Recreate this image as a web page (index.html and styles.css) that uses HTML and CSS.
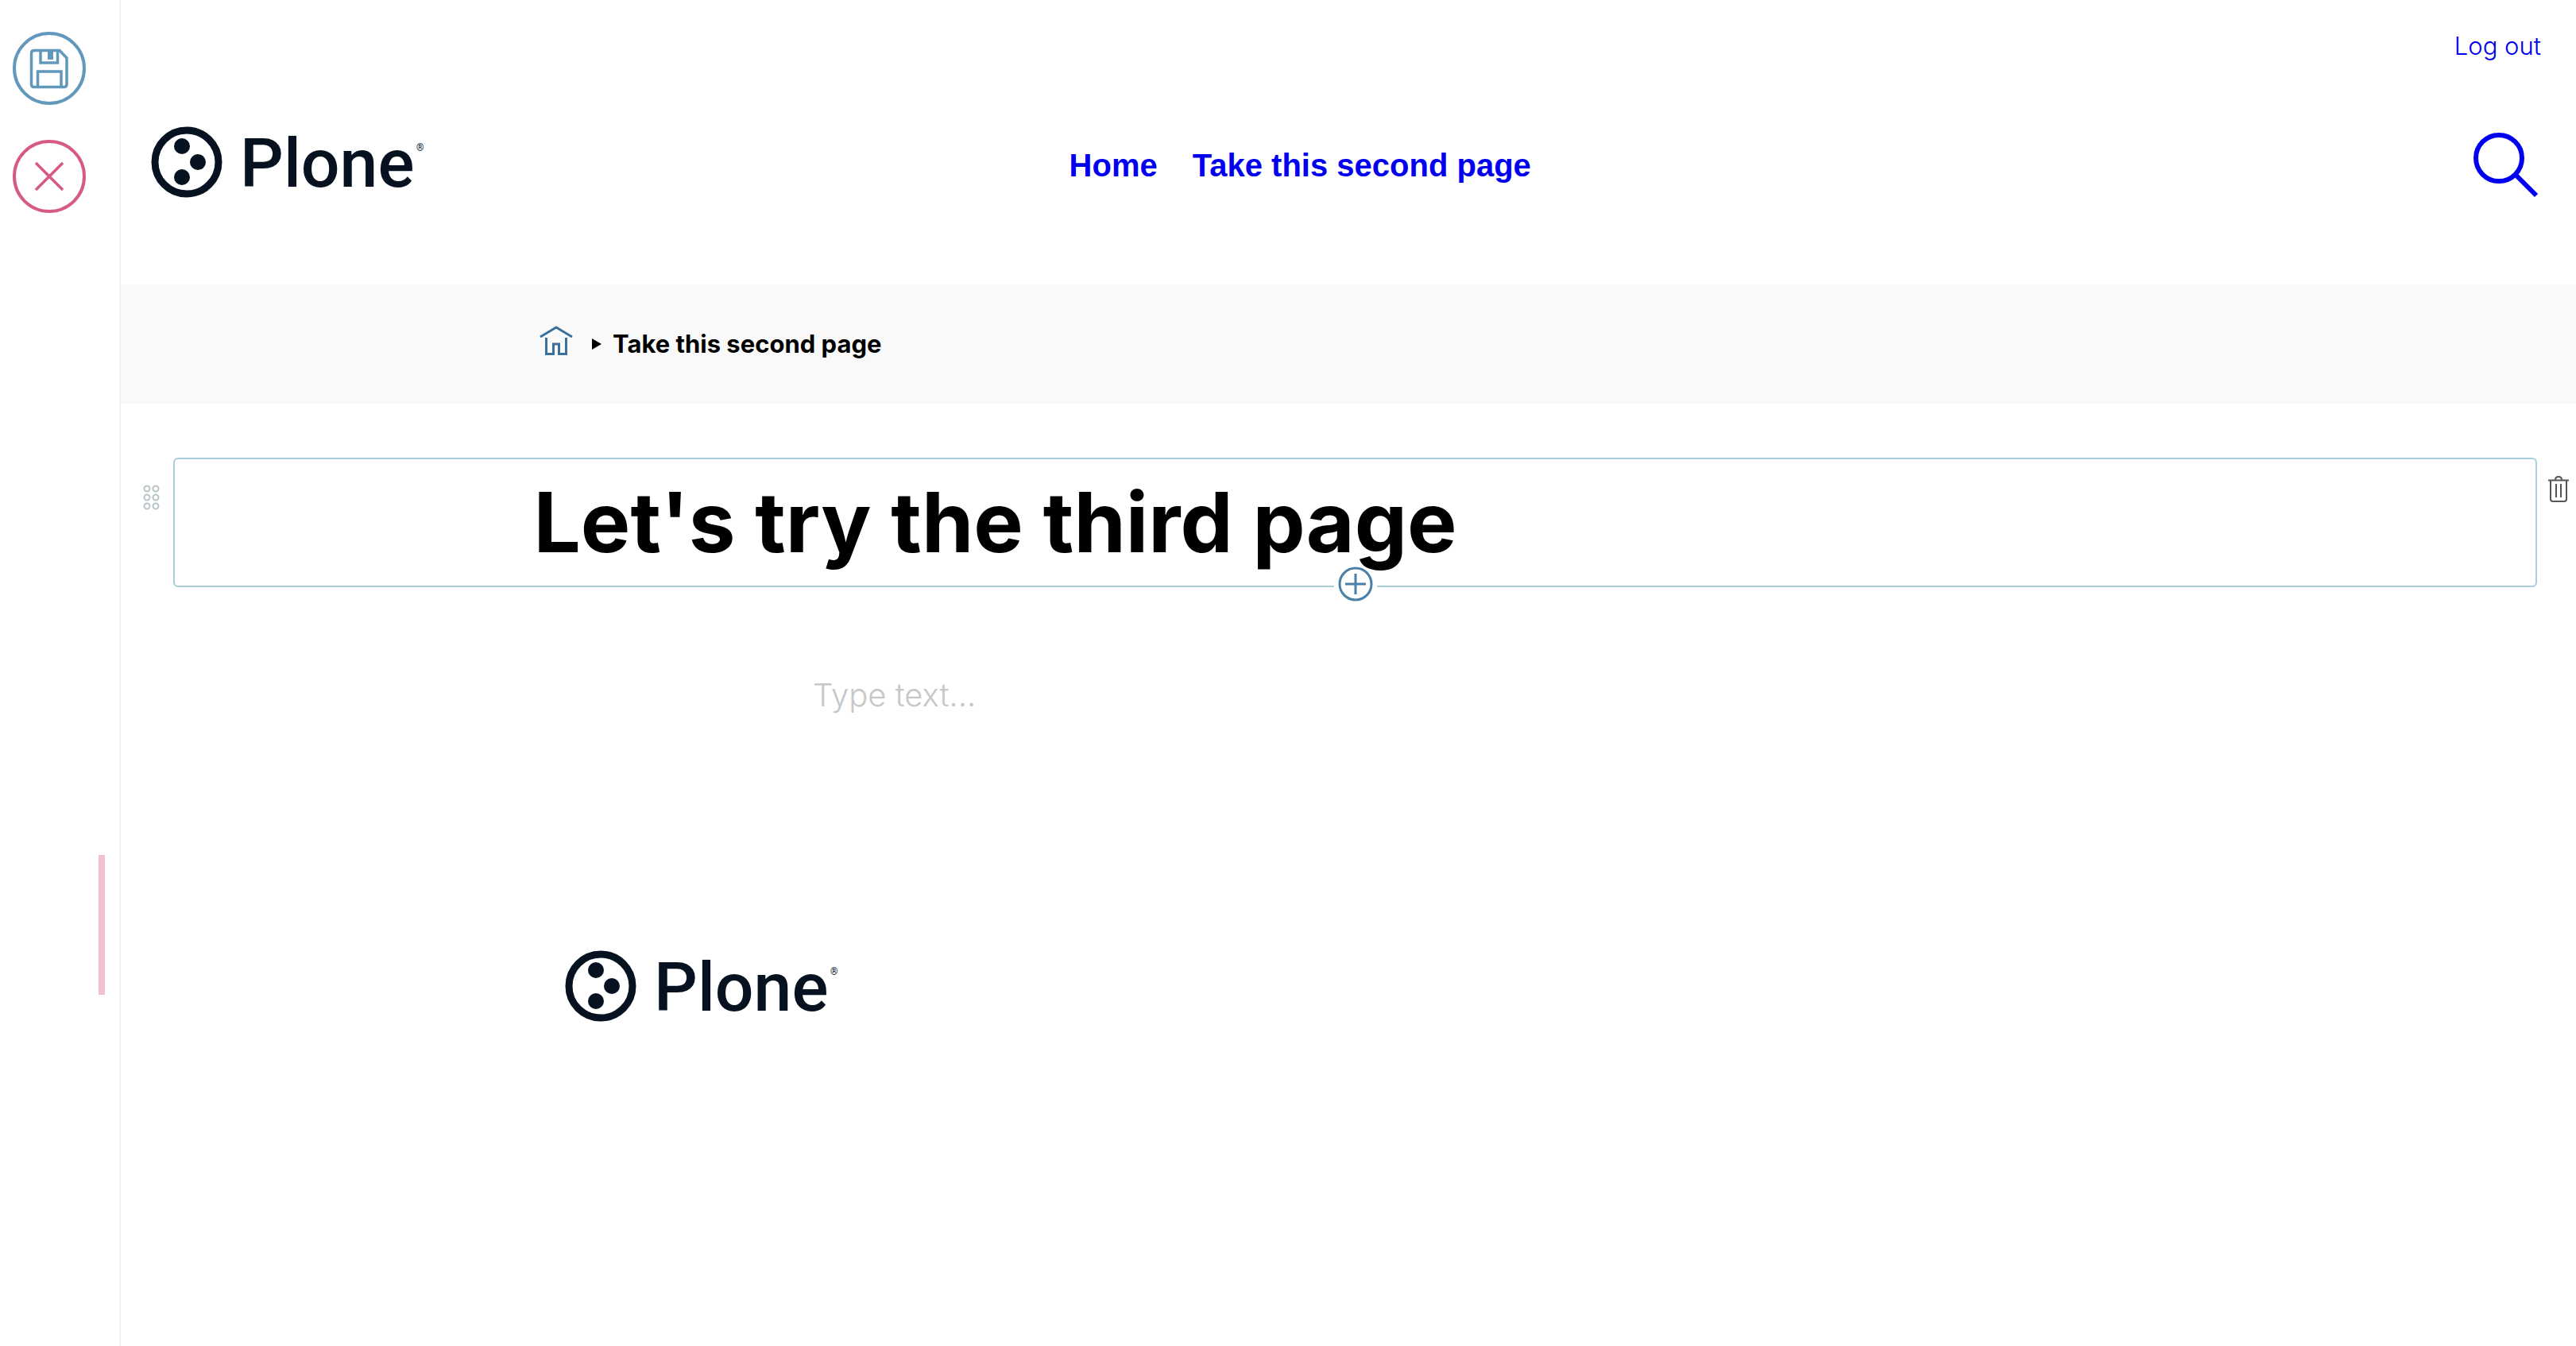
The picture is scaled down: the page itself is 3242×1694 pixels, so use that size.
FILE: index.html
```html
<!DOCTYPE html>
<html lang="en">
<head>
<meta charset="utf-8">
<meta name="viewport" content="width=device-width, initial-scale=1">
<title>Edit Take this second page</title>
<link rel="stylesheet" href="styles.css">
</head>
<body>
<div class="app">
  <aside class="toolbar" aria-label="Toolbar">
    <button class="tool save" type="button" aria-label="Save">
      <svg viewBox="0 0 92 92" fill="none" stroke="currentColor">
        <circle cx="46" cy="46" r="44" stroke-width="4"/>
        <path stroke-width="3.500" d="M26 23.500H59L68 33V66q0 3.500-3.500 3.500H27q-3.500 0-3.500-3.500V27q0-3.500 3.500-3.500zM35 24V39H56.500V24M31.500 69V50H61V69"/>
        <path fill="currentColor" stroke="none" d="M44 24h7v11h-7z"/>
      </svg>
    </button>
    <button class="tool cancel" type="button" aria-label="Cancel">
      <svg viewBox="0 0 92 92" fill="none" stroke="currentColor">
        <circle cx="46" cy="46" r="44" stroke-width="4"/>
        <path stroke-width="3.500" d="M29 29L63 63M63 29L29 63"/>
      </svg>
    </button>
    <button class="handle" type="button" aria-label="Shrink toolbar"></button>
  </aside>

  <div class="page">
    <header class="header">
      <div class="tools"><a href="#logout">Log out</a></div>
      <div class="bar">
        <a class="logo" href="#home" aria-label="Plone">
          <svg viewBox="0 0 350 92">
            <circle cx="45" cy="46" r="40" fill="none" stroke="currentColor" stroke-width="9"/>
            <circle cx="39" cy="26" r="10"/><circle cx="59" cy="46" r="10"/><circle cx="39" cy="65" r="10"/>
            <text class="word" x="112" y="77">Plone</text>
            <text class="mark" x="334" y="32">®</text>
          </svg>
        </a>
        <nav class="nav" aria-label="Site">
          <a href="#home">Home</a>
          <a href="#second">Take this second page</a>
        </nav>
        <button class="search" type="button" aria-label="Search">
          <svg viewBox="0 0 88 88" fill="none" stroke="currentColor" stroke-width="6">
            <circle cx="35" cy="39" r="29"/>
            <path stroke-width="6" d="M55 59L82 86"/>
          </svg>
        </button>
      </div>
    </header>

    <nav class="crumbs" aria-label="Breadcrumbs">
      <div class="crumbs-inner">
        <a class="home" href="#home" aria-label="Home">
          <svg viewBox="0 0 42 38" fill="none" stroke="currentColor" stroke-width="3">
            <path d="M1 14L21 2L41 14M8.500 15V35.500H17.500V23H24.500V35.500H33.500V15"/>
          </svg>
        </a>
        <svg class="caret" viewBox="0 0 12 14"><path d="M0 0L12 7L0 14z"/></svg>
        <span>Take this second page</span>
      </div>
    </nav>

    <main class="content">
      <section class="row">
        <button class="drag" type="button" aria-label="Drag block">
          <svg viewBox="0 0 22 32" fill="none" stroke="currentColor" stroke-width="2">
            <ellipse cx="5" cy="5" rx="3.500" ry="3.500"/><ellipse cx="16" cy="5" rx="3.500" ry="3.500"/>
            <ellipse cx="5" cy="16" rx="3.500" ry="3.500"/><ellipse cx="16" cy="16" rx="3.500" ry="3.500"/>
            <ellipse cx="5" cy="27" rx="3.500" ry="3.500"/><ellipse cx="16" cy="27" rx="3.500" ry="3.500"/>
          </svg>
        </button>
        <div class="block">
          <h1>Let's try the third page</h1>
          <button class="add" type="button" aria-label="Add block">
            <svg viewBox="0 0 44 44" fill="none" stroke="currentColor" stroke-width="3">
              <circle cx="22" cy="22" r="20"/>
              <path d="M9 22H35M22 9V35"/>
            </svg>
          </button>
        </div>
        <button class="trash" type="button" aria-label="Delete block">
          <svg viewBox="0 0 26 34" fill="none" stroke="currentColor" stroke-width="2">
            <path d="M0 6.500H26M3 7V30q0 3 3 3H20q3 0 3-3V7M9 6q0-4 4-4t4 4M10 11V28M16 11V28"/>
          </svg>
        </button>
      </section>
      <input class="entry" type="text" aria-label="Text" placeholder="Type text...">
    </main>

    <footer class="footer">
      <a class="logo" href="#home" aria-label="Plone">
        <svg viewBox="0 0 350 92">
          <circle cx="45" cy="46" r="40" fill="none" stroke="currentColor" stroke-width="9"/>
          <circle cx="39" cy="26" r="10"/><circle cx="59" cy="46" r="10"/><circle cx="39" cy="65" r="10"/>
          <text class="word" x="112" y="77">Plone</text>
          <text class="mark" x="334" y="32">®</text>
        </svg>
      </a>
    </footer>
  </div>
</div>
</body>
</html>
```

FILE: styles.css
```css
* { box-sizing: border-box; }
body {
  margin: 0;
  background: #fff;
  color: #000;
  font-family: Inter, "Liberation Sans", sans-serif;
  font-size: 31px;
  line-height: 40px;
}
a { color: #0000ee; text-decoration: none; }
button { padding: 0; border: 0; background: none; cursor: pointer; }
svg { display: block; width: 100%; height: auto; overflow: visible; }

.app { display: flex; min-height: 100vh; }

.toolbar {
  display: flex;
  flex: none;
  flex-direction: column;
  gap: 44px;
  width: 152px;
  padding: 40px 18px 0 16px;
  border-right: 2px solid #f0f0f5;
}
.tool { width: 92px; }
.save { color: #6398bd; }
.cancel { color: #d55a86; }
.handle {
  align-self: flex-end;
  width: 8px;
  height: 176px;
  margin-top: 764px;
  background: #f1bfd1;
}

.page { flex: 1; min-width: 0; }

.header { padding: 38px 44px 108px 38px; }
.tools { text-align: right; font-weight: 300; }
.bar {
  display: grid;
  grid-template-columns: 10fr auto 11fr;
  align-items: center;
  margin-top: 80px;
}
.logo { display: block; width: 350px; color: #06121f; fill: currentColor; }
.word { font: 500 86px/92px Roboto, sans-serif; }
.mark { font: 12px/12px Roboto, sans-serif; }
.nav {
  display: flex;
  gap: 44px;
  padding-top: 8px;
  font: bold 40px/48px "Liberation Sans", sans-serif;
}
.search { justify-self: end; width: 88px; color: #0000ee; }

.crumbs { padding: 0 32px; background: #f9f9f9; }
.crumbs-inner {
  display: flex;
  align-items: center;
  max-width: 2036px;
  height: 150px;
  margin: 0 auto;
  font-weight: 700;
}
.home { width: 42px; margin: 0 24px 8px 0; color: #3a709b; }
.caret { width: 12px; margin-right: 14px; }

.row {
  display: grid;
  grid-template-columns: 66px 1fr 49px;
  align-items: start;
  margin-top: 68px;
}
.drag { justify-self: center; width: 22px; margin: 34px 0 0 12px; color: #b9c3c8; }
.block {
  position: relative;
  height: 163px;
  padding: 14px 16px;
  border: 2px solid #a9cedb;
  border-radius: 6px;
}
h1 {
  position: relative;
  z-index: 1;
  max-width: 2068px;
  margin: 0 auto;
  font-size: 105px;
  line-height: 130px;
  pointer-events: none;
}
.add {
  position: absolute;
  bottom: -20px;
  left: 50%;
  width: 54px;
  padding: 0 5px;
  transform: translateX(-50%);
  background: #fff;
  color: #4a7fa7;
}
.trash { justify-self: center; width: 26px; margin: 22px 0 0 4px; color: #555; }

.entry {
  display: block;
  width: calc(100% - 64px);
  max-width: 1348px;
  margin: 112px auto 0;
  padding: 0;
  border: 0;
  outline: 0;
  background: none;
  font: 300 40px/48px Inter, sans-serif;
}
.entry::placeholder { color: #c7c7c7; opacity: 1; }

.footer { max-width: 1972px; margin: 296px auto 0; }
```
